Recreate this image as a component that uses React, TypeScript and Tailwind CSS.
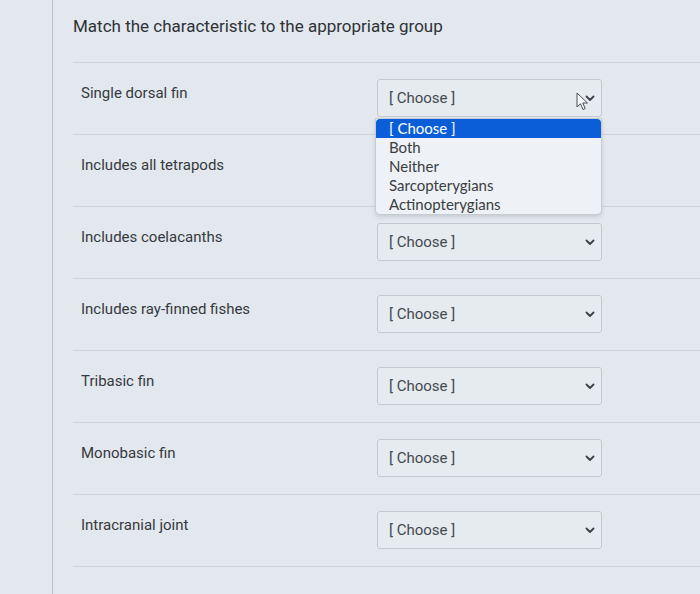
import React from "react";

const rows = [
  "Single dorsal fin",
  "Includes all tetrapods",
  "Includes coelacanths",
  "Includes ray-finned fishes",
  "Tribasic fin",
  "Monobasic fin",
  "Intracranial joint",
];

const options = ["[ Choose ]", "Both", "Neither", "Sarcopterygians", "Actinopterygians"];

function Chevron() {
  return (
    <svg width="10" height="7" viewBox="0 0 10 7" className="text-[#3b4148]">
      <path d="M1.5 1.5 L5 5 L8.5 1.5" fill="none" stroke="currentColor" strokeWidth="1.8" strokeLinecap="round" strokeLinejoin="round" />
    </svg>
  );
}

function Cursor() {
  return (
    <svg width="14" height="20" viewBox="0 0 14 20" className="absolute left-[576px] top-[92px]">
      <path d="M1 1 L1 15 L4.5 11.8 L7 17.5 L9.2 16.5 L6.8 11 L11.5 11 Z" fill="#f4f6f8" stroke="#4a4f55" strokeWidth="1" strokeLinejoin="round" />
    </svg>
  );
}

export default function App() {
  return (
    <div className="relative h-[594px] w-[700px] overflow-hidden bg-[#e3e8ee] font-['Roboto',sans-serif]">
      <div className="ml-[52px] h-full border-l border-[#bcc3cb] pl-5 pt-[14px]">
        <h1 className="text-[17px] leading-[24px] text-[#2e3237]">
          Match the characteristic to the appropriate group
        </h1>
        <div className="mt-[24px]">
          {rows.map((label, i) => (
            <div key={label} className="flex h-[72px] border-t border-[#ccd2d9] pl-2">
              <div className="w-[296px] pt-[20px] text-[15px] leading-[20px] text-[#363a40]">{label}</div>
              {/* the second row's select sits under the open list */}
              <div
                className={
                  i === 1
                    ? "invisible mt-[16px] h-[38px] w-[225px]"
                    : "mt-[16px] flex h-[38px] w-[225px] items-center justify-between rounded-[3px] border border-[#c3c9d0] bg-[#e6ebf0] pl-[11px] pr-[6px]"
                }
              >
                {i !== 1 && (
                  <>
                    <span className="text-[15px] text-[#45494e]">[ Choose ]</span>
                    <Chevron />
                  </>
                )}
              </div>
            </div>
          ))}
          <div className="border-t border-[#ccd2d9]" />
        </div>
      </div>

      <div className="absolute left-[375px] top-[118px] w-[227px] overflow-hidden rounded-b-[5px] border border-[#c6ccd3] bg-[#eef1f5] font-['Lato',sans-serif] shadow-[0_2px_4px_rgba(0,0,0,0.12)]">
        {options.map((opt, i) => (
          <div
            key={opt}
            className={
              i === 0
                ? "h-[19px] rounded-t-[4px] bg-[#0b5ed8] pl-[13px] text-[15px] leading-[19px] text-white"
                : "h-[19px] pl-[13px] text-[15px] leading-[19px] text-[#3a3e43]"
            }
          >
            {opt}
          </div>
        ))}
      </div>

      <Cursor />
    </div>
  );
}
